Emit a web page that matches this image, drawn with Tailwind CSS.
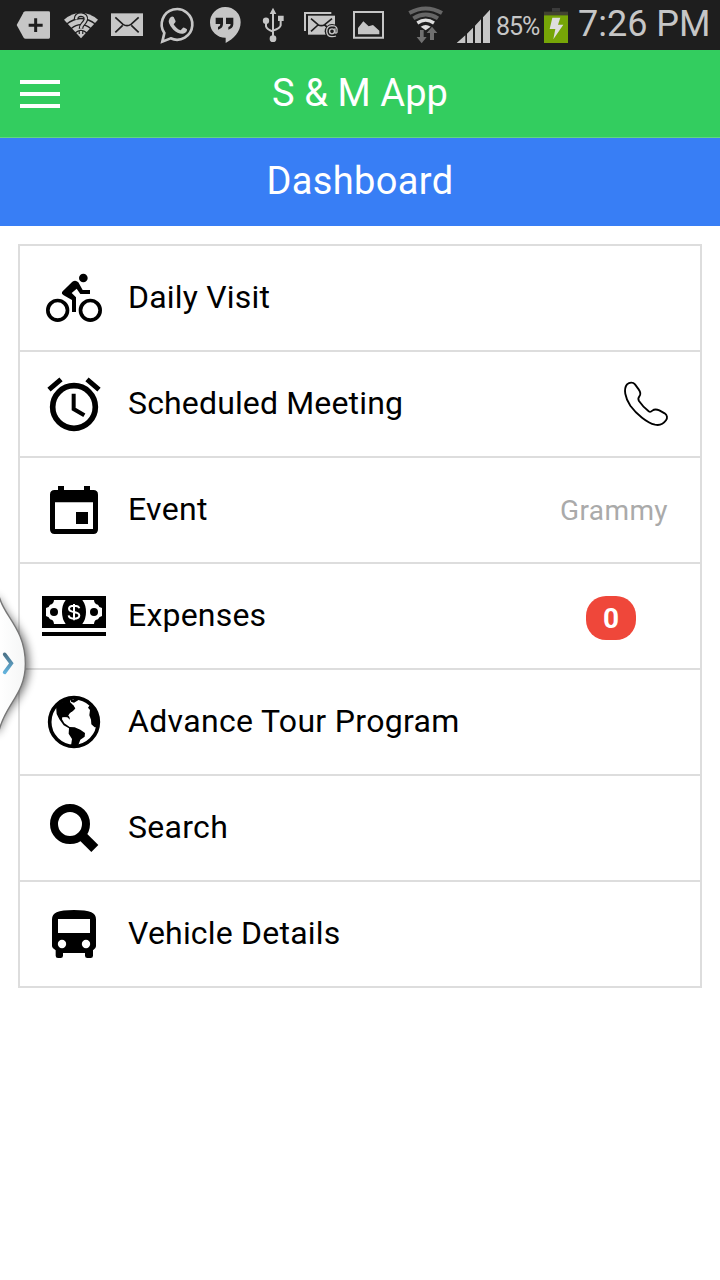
<!DOCTYPE html>
<html lang="en">
<head>
<meta charset="utf-8">
<title>S &amp; M App</title>
<script src="https://cdn.jsdelivr.net/npm/@tailwindcss/browser@4"></script>
</head>
<body class="relative w-[720px] h-[1280px] overflow-hidden bg-white font-['Roboto',sans-serif] text-black">
<div class="flex h-[50px] bg-[#1e1e1e] text-[#c6c6c6] whitespace-nowrap">
  <svg class="h-[50px] w-[58px] shrink-0" viewBox="0 0 174 150" fill="#c6c6c6"><path d="M50 75L71 37Q73 34 77 34H146Q150 34 150 38V112Q150 116 146 116H77Q73 116 71 113Z"/><path d="M107 55V96M86 75.500H128" stroke="#1e1e1e" stroke-width="9"/></svg>
  <svg class="h-[50px] w-[46px] shrink-0" viewBox="174 0 138 150" fill="none"><path d="M192 59Q243 18 294 59L243 115Z" fill="#c6c6c6"/><path d="M199 73Q243 38 287 73M213 86Q243 62 273 86M225 99Q243 84 261 99" stroke="#1e1e1e" stroke-width="4"/><path d="M228 58Q229 43 244 44Q260 46 257 60Q255 66 248 73Q243 78 243 86M243 92V102" stroke="#1e1e1e" stroke-width="14"/><path d="M228 58Q229 43 244 44Q260 46 257 60Q255 66 248 73Q243 78 243 86M243 93V102" stroke="#c6c6c6" stroke-width="7"/></svg>
  <svg class="h-[50px] w-[46px] shrink-0" viewBox="312 0 138 150" fill="none"><path d="M333 40H429V108H333Z" fill="#c6c6c6"/><path d="M346 52L369 73Q381 81 393 73L416 52M346 97L368 76M416 97L394 76" stroke="#1e1e1e" stroke-width="5"/></svg>
  <svg class="h-[50px] w-[50px] shrink-0" viewBox="450 0 150 150" fill="none"><path d="M487 125L493 99A46 46 0 1 1 512 115Z" stroke="#c6c6c6" stroke-width="8"/><path d="M509 55Q515 46 521 51L527 64Q527 67 521 73Q529 87 542 91L549 83Q552 81 561 88Q562 98 549 101Q535 103 520 89Q500 69 509 55Z" fill="#c6c6c6"/></svg>
  <svg class="h-[50px] w-[50px] shrink-0" viewBox="600 0 150 150"><path d="M675 21A46 46 0 0 1 722 67C722 96 700 118 677 129V113A46 46 0 1 1 675 21Z" fill="#c6c6c6"/><path d="M647 53H669V73Q668 86 654 89V81Q661 79 661 72H647ZM678 53H700V73Q699 86 685 89V81Q692 79 692 72H678Z" fill="#1e1e1e"/></svg>
  <svg class="h-[50px] w-[50px] shrink-0" viewBox="30 0 150 150" fill="none"><path d="M99 36V116M78 62V79Q80 88 99 95M122 54V76Q121 84 99 92" stroke="#c6c6c6" stroke-width="6"/><path d="M99 23L109 42H89ZM114 47H131V63H114Z" fill="#c6c6c6"/><circle cx="78" cy="62" r="9.500" fill="#c6c6c6"/><circle cx="99" cy="116" r="10" fill="#c6c6c6"/></svg>
  <svg class="h-[50px] w-[46px] shrink-0" viewBox="180 0 138 150" fill="none"><path d="M195 93V39H274" stroke="#c6c6c6" stroke-width="6"/><path d="M204 47H285V104H204Z" fill="#c6c6c6"/><path d="M213 56L234 74Q244 80 254 74L276 56M213 94L234 75M276 94L254 75" stroke="#1e1e1e" stroke-width="5"/><circle cx="276" cy="94" r="22" fill="#1e1e1e"/><circle cx="276" cy="94" r="7.500" stroke="#c6c6c6" stroke-width="4"/><path d="M285 85V97Q287 102 291 97Q295 77 276 77Q260 78 260 94Q261 111 277 110Q283 110 288 108" stroke="#c6c6c6" stroke-width="4"/></svg>
  <svg class="h-[50px] w-[54px] shrink-0" viewBox="318 0 162 150" fill="none"><path d="M342 36H429V113H342Z" stroke="#c6c6c6" stroke-width="6"/><path d="M354 103V84L370 64L386 79L399 75L418 92V103Z" fill="#c6c6c6"/></svg>
  <svg class="h-[50px] w-[50px] shrink-0" viewBox="480 0 150 150" fill="none"><path d="M508 39Q557 12 606 39M520 55Q557 32 594 55" stroke="#666" stroke-width="12"/><path d="M532 69Q557 52 582 69" stroke="#dedede" stroke-width="10"/><path d="M542 80Q557 70 572 80L557 91Z" fill="#dedede"/><path d="M540 90H551V111H560L545 130L530 111H540ZM576 80L592 99H582V120H570V99H560Z" fill="#707070"/></svg>
  <svg class="h-[50px] w-[44px] shrink-0" viewBox="0 0 132 150" fill="#c6c6c6"><path d="M20 129L46 106V129ZM51 101L69 83V129H51ZM75 77L93 58V129H75ZM99 52L120 29V129H99Z"/></svg>
  <div class="w-[50px] shrink-0 pl-[2px] pt-3 text-[25px] leading-[30px] tracking-[-1.1px]">85%</div>
  <svg class="h-[50px] w-[24px] shrink-0" viewBox="282 0 72 150"><path d="M306 24H330V35H306Z" fill="#3b3b3b"/><path d="M282 35H354V47H282Z" fill="#424331"/><path d="M282 46H354V129H282Z" fill="#76a507"/><path d="M307 53H331L324 74H340L310 118L316 87H299Z" fill="#dedede"/></svg>
  <div class="pl-[10px] pt-[2px] text-[36px] leading-[45px]">7:26 PM</div>
</div>
<header class="flex h-[88px] items-center border-b border-[#61d67e] bg-[#33cd5f] text-white">
  <div class="flex w-[100px] flex-col gap-2 pl-5"><i class="h-1 w-10 bg-white"></i><i class="h-1 w-10 bg-white"></i><i class="h-1 w-10 bg-white"></i></div>
  <h1 class="w-[520px] pb-[2px] text-center text-[38px] leading-[44px] tracking-[0.1px]">S &amp; M App</h1>
</header>
<h2 class="h-[88px] bg-[#387ef5] pt-[21px] text-center text-[38px] leading-[44px] tracking-[0.35px] text-white">Dashboard</h2>
<main class="mx-[18px] mt-[18px] border-2 border-b-0 border-[#ddd] text-[32px] leading-10 tracking-[0.2px]">
  <div class="flex h-[106px] items-center border-b-2 border-[#ddd] pl-[22px]">
    <svg class="size-16 shrink-0" viewBox="36 18 192 192"><g fill="none" stroke="#000" stroke-width="11"><circle cx="83" cy="151" r="29.500"/><circle cx="181" cy="151" r="29.500"/></g><circle cx="160" cy="54" r="13"/><path d="M98 94L127 65Q137 58 145 67L158 90H180V102H151L140 86L125 99L138 112V156H126V120L101 106Q92 101 98 94Z"/></svg>
    <span class="pb-[2px] pl-[22px]">Daily Visit</span>
  </div>
  <div class="flex h-[106px] items-center border-b-2 border-[#ddd] pl-[22px]">
    <svg class="size-16 shrink-0" viewBox="36 336 192 192" fill="none" stroke="#000"><circle cx="132" cy="441" r="64" stroke-width="17"/><path d="M131 401V447L163 466" stroke-width="12"/><path d="M57 389L93 358M171 358L207 389" stroke-width="15"/></svg>
    <span class="pb-[2px] pl-[22px] tracking-[0.15px]">Scheduled Meeting</span>
    <svg class="ml-auto mr-8 size-11 overflow-visible" viewBox="222 36 132 132" fill="none" stroke="#000" stroke-width="5.500" stroke-linejoin="round"><path d="M231 43C238 37 249 36 255 43L266 58C271 65 273 73 268 79C264 84 264 88 267 93C275 105 286 116 296 124C300 127 303 126 307 122C313 117 321 118 328 121L344 130C352 135 353 144 348 151C341 161 329 167 315 164C291 158 260 133 241 107C225 83 220 57 231 43Z"/></svg>
  </div>
  <div class="flex h-[106px] items-center border-b-2 border-[#ddd] pl-[22px]">
    <svg class="size-16 shrink-0" viewBox="36 9 192 192"><path fill-rule="evenodd" d="M84 33H102V45H162V33H180V45H190Q204 45 204 59V163Q204 177 190 177H74Q60 177 60 163V59Q60 45 74 45H84ZM75 82V162H189V82ZM138 111H174V147H138Z"/></svg>
    <span class="pb-[2px] pl-[22px] tracking-[0.3px]">Event</span>
    <span class="ml-auto mr-8 pt-[2px] text-[28px] tracking-[0.4px] text-[#aaa]">Grammy</span>
  </div>
  <div class="flex h-[106px] items-center border-b-2 border-[#ddd] pl-[22px]">
    <svg class="size-16 shrink-0" viewBox="36 327 192 192"><path d="M36 363H228V459H36ZM36 471H228V483H36Z"/><path fill="#fff" d="M72 375H107Q96 390 96 411Q96 432 107 447H72Q71 434 60 433Q58 425 48 423V399Q58 397 60 389Q71 388 72 375ZM157 375H192Q193 388 204 389Q206 397 216 399V423Q206 425 204 433Q193 434 192 447H157Q168 432 168 411Q168 390 157 375Z"/><circle cx="72" cy="411" r="12"/><circle cx="192" cy="411" r="12"/><path d="M148 400Q146 392 132 392Q117 392 117 401Q117 408 132 411Q148 414 148 422Q147 431 132 431Q117 430 116 421M132 387V436" fill="none" stroke="#fff" stroke-width="6"/></svg>
    <span class="pb-[2px] pl-[22px]">Expenses</span>
    <span class="ml-auto mr-16 mt-[4px] flex h-11 w-[50px] items-center justify-center rounded-[20px] bg-[#ef473a] pt-[2px] text-[28px] font-bold tracking-normal text-white">0</span>
  </div>
  <div class="flex h-[106px] items-center border-b-2 border-[#ddd] pl-[22px]">
    <svg class="size-16 shrink-0" viewBox="36 15 192 192"><circle cx="132" cy="111" r="73" fill="none" stroke="#000" stroke-width="11"/><path d="M78 62L107 43L121 39L123 50L132 53L142 47L151 41L136 40L129 45L118 36L96 45ZM78 61L94 51L108 60L116 64L128 60L136 70L129 78L119 84L113 90L118 95L120 104L112 97L97 95L96 103L103 115L119 126L134 127L151 134L165 144L164 155L151 164L144 182H123L126 162L116 146L117 130L101 121L88 103L80 87ZM179 61Q206 82 207 113L205 127H194L184 118L183 104L178 91L180 75L174 68Z"/><path d="M86 60L106 44L122 42L120 51L132 63L134 72L120 83L112 96L96 97L86 85Z"/></svg>
    <span class="pb-[2px] pl-[22px] tracking-[0.33px]">Advance Tour Program</span>
  </div>
  <div class="flex h-[106px] items-center border-b-2 border-[#ddd] pl-[22px]">
    <svg class="size-16 shrink-0" viewBox="36 333 192 192"><circle cx="120" cy="417" r="48" fill="none" stroke="#000" stroke-width="24"/><path d="M171 446L205 480L184 501L150 467Z"/></svg>
    <span class="pb-[2px] pl-[22px] tracking-[0.3px]">Search</span>
  </div>
  <div class="flex h-[106px] items-center border-b-2 border-[#ddd] pl-[22px]">
    <svg class="size-16 shrink-0" viewBox="36 651 192 192"><path fill-rule="evenodd" d="M66 703Q66 688 80 682Q96 675 132 675Q168 675 184 682Q198 688 198 703V784Q198 791 189 796V812Q189 819 182 819H172Q165 819 165 812V804H99V812Q99 819 92 819H84Q77 819 77 812V796Q66 790 66 784ZM84 702V744H180V702Z"/><circle cx="96" cy="777" r="12.500" fill="#fff"/><circle cx="168" cy="777" r="12.500" fill="#fff"/></svg>
    <span class="pb-[2px] pl-[22px]">Vehicle Details</span>
  </div>
</main>
<svg class="absolute left-0 top-[585px] h-[155px] w-[50px] overflow-visible" viewBox="0 0 150 465">
  <defs>
    <filter id="shade" x="-50%" y="-20%" width="220%" height="140%"><feGaussianBlur stdDeviation="14"/></filter>
    <linearGradient id="face" x1="0" x2="1" y1="0" y2="0"><stop offset="0" stop-color="#fff"/><stop offset="1" stop-color="#f5f6f6"/></linearGradient>
    <linearGradient id="arrow" x1="0" x2="0" y1="0" y2="1"><stop offset="0" stop-color="#4c7389"/><stop offset="1" stop-color="#62b2dc"/></linearGradient>
  </defs>
  <path d="M-20 30L0 50C20 105 86 135 86 240C86 330 20 360 0 430L-20 450Z" fill="#000" opacity=".6" filter="url(#shade)"/>
  <path d="M-5 28L0 42C15 95 76 135 76 236C76 325 20 355 0 427L-5 445Z" fill="url(#face)" stroke="#777" stroke-width="4"/>
  <path d="M14 208L34 235L14 262" fill="none" stroke="url(#arrow)" stroke-width="11" stroke-linecap="round"/>
</svg>
</body>
</html>
